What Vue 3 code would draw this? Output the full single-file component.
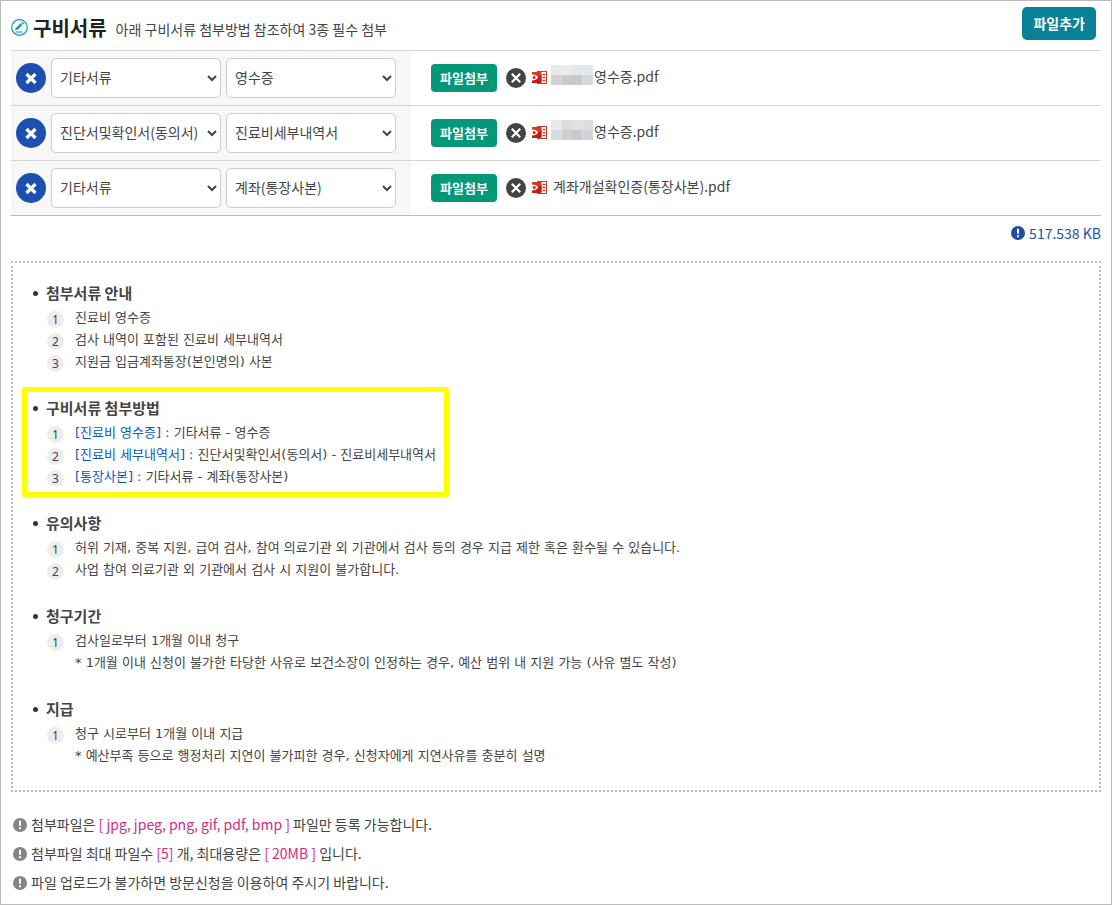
<script setup>
import { ref } from 'vue'

const kinds = ['기타서류', '진단서및확인서(동의서)']
const details = ['영수증', '진료비세부내역서', '계좌(통장사본)']

const rows = ref([
  { id: 1, kind: '기타서류', detail: '영수증', file: '영수증.pdf', mask: ['#e9e9ea', '#ececed', '#e4e5e8', '#e2e7ef', '#d2d2d5', '#cbcbcd', '#c9c9cc', '#d3d8e0'] },
  { id: 2, kind: '진단서및확인서(동의서)', detail: '진료비세부내역서', file: '영수증.pdf', mask: ['#e9e9ea', '#dcdcde', '#e2e2e5', '#dcdce0', '#dadadc', '#cfcfd1', '#c9c9cb', '#d3d3d6'] },
  { id: 3, kind: '기타서류', detail: '계좌(통장사본)', file: '계좌개설확인증(통장사본).pdf', mask: null },
])

const sections = [
  {
    title: '첨부서류 안내',
    items: [{ text: '진료비 영수증' }, { text: '검사 내역이 포함된 진료비 세부내역서' }, { text: '지원금 입금계좌통장(본인명의) 사본' }],
  },
  {
    title: '구비서류 첨부방법',
    marked: true,
    items: [
      { tag: '[진료비 영수증]', text: ' : 기타서류 - 영수증' },
      { tag: '[진료비 세부내역서]', text: ' : 진단서및확인서(동의서) - 진료비세부내역서' },
      { tag: '[통장사본]', text: ' : 기타서류 - 계좌(통장사본)' },
    ],
  },
  {
    title: '유의사항',
    items: [
      { text: '허위 기재, 중복 지원, 급여 검사, 참여 의료기관 외 기관에서 검사 등의 경우 지급 제한 혹은 환수될 수 있습니다.' },
      { text: '사업 참여 의료기관 외 기관에서 검사 시 지원이 불가합니다.' },
    ],
  },
  {
    title: '청구기간',
    items: [{ text: '검사일로부터 1개월 이내 청구', note: '* 1개월 이내 신청이 불가한 타당한 사유로 보건소장이 인정하는 경우, 예산 범위 내 지원 가능 (사유 별도 작성)' }],
  },
  {
    title: '지급',
    items: [{ text: '청구 시로부터 1개월 이내 지급', note: '* 예산부족 등으로 행정처리 지연이 불가피한 경우, 신청자에게 지연사유를 충분히 설명' }],
  },
]

const notes = [
  [{ t: '첨부파일은 ' }, { t: '[ jpg, jpeg, png, gif, pdf, bmp ]', hot: true }, { t: ' 파일만 등록 가능합니다.' }],
  [{ t: '첨부파일 최대 파일수 ' }, { t: '[5]', hot: true }, { t: ' 개, 최대용량은 ' }, { t: '[ 20MB ]', hot: true }, { t: ' 입니다.' }],
  [{ t: '파일 업로드가 불가하면 방문신청을 이용하여 주시기 바랍니다.' }],
]
</script>

<template>
  <main class="page">
    <header class="head">
      <svg class="head-icon" viewBox="0 0 17 17" aria-hidden="true">
        <circle cx="8.5" cy="8.5" r="7.8" fill="none" stroke="#1a9bb3" stroke-width="1.2" />
        <path d="M4 11.300l.8-2.400 4.700-4.700 2 1.900-4.700 4.700z M10.200 3.500l.9-.8 2 1.900-.9.8z" fill="#1a9bb3" />
        <path d="M4.500 13h7" stroke="#1a9bb3" stroke-width="1.100" />
      </svg>
      <h1>구비서류</h1>
      <p>아래 구비서류 첨부방법 참조하여 3종 필수 첨부</p>
      <button type="button" class="add">파일추가</button>
    </header>

    <table class="files">
      <tbody>
        <tr v-for="row in rows" :key="row.id">
          <td class="pick">
            <div class="line">
              <button type="button" class="remove" aria-label="행 삭제">
                <svg viewBox="0 0 30 30" aria-hidden="true"><path d="M10.500 11l9 9M19.500 11l-9 9" stroke="#fff" stroke-width="3.200" /></svg>
              </button>
              <select v-model="row.kind" aria-label="서류 구분">
                <option v-for="k in kinds" :key="k">{{ k }}</option>
              </select>
              <select v-model="row.detail" aria-label="세부 서류">
                <option v-for="d in details" :key="d">{{ d }}</option>
              </select>
            </div>
          </td>
          <td class="attached">
            <div class="line">
              <button type="button" class="attach">파일첨부</button>
              <button type="button" class="clear" aria-label="첨부 삭제">
                <svg viewBox="0 0 20 20" aria-hidden="true"><circle cx="10" cy="10" r="10" fill="#444" /><path d="M5.800 5.800l8.400 8.400M14.200 5.800l-8.400 8.400" stroke="#fff" stroke-width="2.200" /></svg>
              </button>
              <svg class="doc" viewBox="0 0 15 13" aria-hidden="true">
                <rect x="5.500" y=".5" width="9" height="12" fill="#fff" stroke="#c4432c" />
                <path d="M10.500 3.500h3M10.500 6.500h3M10.500 9.500h3" stroke="#c4432c" stroke-width="1.300" />
                <path d="M0 1h7.500l2-1v11.500l-2 .5H0z" fill="#d63a22" />
                <path d="M0 9l9.500-5v7.500l-2 .5H0z" fill="#c21f10" />
                <path d="M0 3.500c3 0 5 1.200 6 3-1 1.800-3 3-6 3z" fill="#fff" />
                <circle cx="2.200" cy="6.500" r="1.500" fill="#d02a18" />
              </svg>
              <svg v-if="row.mask" class="mask" viewBox="0 0 40 20" preserveAspectRatio="none" aria-hidden="true">
                <rect v-for="(c, i) in row.mask" :key="i" :x="(i % 4) * 10" :y="i > 3 ? 10 : 0" width="10" height="10" :fill="c" />
              </svg>
              <span class="name">{{ row.file }}</span>
            </div>
          </td>
        </tr>
      </tbody>
    </table>

    <p class="total">
      <svg class="alert" viewBox="0 0 14 14" aria-hidden="true"><circle cx="7" cy="7" r="7" fill="#1d4fa8" /><path d="M7 2.800v5M7 9.200v2" stroke="#fff" stroke-width="2" /></svg>
      <span>517.538 KB</span>
    </p>

    <div class="guide">
      <section v-for="s in sections" :key="s.title" :class="{ marked: s.marked }">
        <h2>{{ s.title }}</h2>
        <ol>
          <li v-for="(item, i) in s.items" :key="i">
            <span class="num">{{ i + 1 }}</span>
            <div>
              <p><span v-if="item.tag" class="tag">{{ item.tag }}</span>{{ item.text }}</p>
              <p v-if="item.note">{{ item.note }}</p>
            </div>
          </li>
        </ol>
      </section>
    </div>

    <ul class="notes">
      <li v-for="(n, i) in notes" :key="i">
        <svg class="alert" viewBox="0 0 14 14" aria-hidden="true"><circle cx="7" cy="7" r="7" fill="#858585" /><path d="M7 2.800v5M7 9.200v2" stroke="#fff" stroke-width="2" /></svg>
        <p><span v-for="(p, j) in n" :key="j" :class="{ hot: p.hot }">{{ p.t }}</span></p>
      </li>
    </ul>
  </main>
</template>

<style>
body {
  background: #fff;
}
</style>

<style scoped>
.page {
  box-sizing: border-box;
  min-height: 100vh;
  padding: 0 10px;
  border: 1px solid #bbb;
  color: #444;
  font: 14px/20px "Noto Sans CJK KR", sans-serif;
}
h1, h2, p, ol, ul {
  margin: 0;
  padding: 0;
}
button, select {
  font-family: inherit;
}
button {
  padding: 0;
  border: 0;
  cursor: pointer;
}
.head {
  display: flex;
  align-items: center;
  height: 49px;
  padding-right: 5px;
}
.head-icon {
  width: 17px;
  height: 17px;
  margin: 4px 5px 0 0;
}
h1 {
  margin-top: 4px;
  color: #222;
  font-size: 20px;
  font-weight: 700;
  line-height: 28px;
}
.head p {
  margin: 6px 0 0 9px;
}
.add {
  height: 33px;
  margin: 0 0 4px auto;
  padding: 0 11px 2px;
  border-radius: 5px;
  background: #0a8295;
  color: #fff;
  font-size: 14px;
  font-weight: 700;
}
.files {
  width: 100%;
  border-collapse: collapse;
  border-bottom: 1px solid #bbb;
}
.files td {
  height: 54px;
  padding: 0;
  border-top: 1px solid #d5d5d5;
}
.pick {
  width: 400px;
  background: #f7f7f7;
}
.line {
  display: flex;
  align-items: center;
}
.pick .line {
  gap: 5px;
  padding: 0 15px 0 5px;
}
.remove {
  width: 30px;
  height: 30px;
  border-radius: 50%;
  background: #1d4fb0;
}
.remove svg, .clear svg {
  display: block;
  width: 100%;
}
select {
  width: 170px;
  height: 40px;
  padding: 0 4px 2px;
  border: 1px solid #ccc;
  border-radius: 5px;
  background: #fff;
  color: #444;
  font-size: 14px;
}
.attached .line {
  padding-left: 20px;
}
.attach {
  width: 66px;
  height: 28px;
  padding-bottom: 2px;
  border-radius: 4px;
  background: #059878;
  color: #fff;
  font-size: 13px;
  font-weight: 700;
}
.clear {
  width: 20px;
  height: 20px;
  margin: 0 6px 0 9px;
  border-radius: 50%;
  background: none;
}
.doc {
  width: 15px;
  height: 13px;
  margin-bottom: 2px;
}
.mask {
  width: 42px;
  height: 20px;
  margin: 0 -5px 6px 4px;
}
.name {
  margin: 0 0 4px 6px;
}
.alert {
  flex: none;
  width: 14px;
  height: 14px;
}
.total {
  display: flex;
  align-items: center;
  justify-content: flex-end;
  gap: 4px;
  height: 33px;
  margin-bottom: 12px;
  color: #1d4fa8;
}
.guide {
  padding: 18px 20px 0;
  border: 2px dotted #bbb;
}
section {
  position: relative;
  padding-bottom: 23px;
}
.marked::after {
  content: "";
  position: absolute;
  top: -9px;
  left: -11px;
  width: 417px;
  height: 100px;
  border: 5px solid #ff0;
  border-radius: 2px;
}
h2 {
  display: flex;
  align-items: center;
  gap: 8px;
  margin-bottom: 2px;
  font-size: 15px;
  font-weight: 700;
  line-height: 24px;
}
h2::before {
  content: "";
  width: 5px;
  height: 5px;
  border-radius: 50%;
  background: #333;
}
ol, ul {
  list-style: none;
}
ol {
  padding-left: 14px;
}
ol li {
  display: flex;
  gap: 11px;
  font: 13px/22px "DejaVu Sans", "Noto Sans CJK KR", sans-serif;
}
.num {
  width: 17px;
  height: 17px;
  margin-top: 4px;
  border-radius: 50%;
  background: #ededed;
  font: 12px/17px "Noto Sans", sans-serif;
  text-align: center;
}
.tag {
  color: #0b57c0;
}
.notes {
  margin-top: 18px;
  padding-left: 2px;
}
.notes li {
  display: flex;
  align-items: center;
  gap: 4px;
  height: 29px;
}
.notes p {
  margin-bottom: 2px;
}
.hot {
  color: #d02b85;
}
</style>
